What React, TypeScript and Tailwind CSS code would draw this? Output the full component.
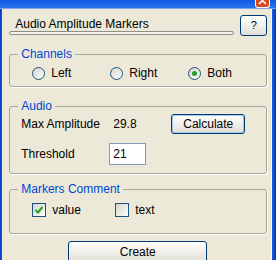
const font = { fontFamily: '"Liberation Sans", Arial, sans-serif' };

const Radio = ({ label, checked }: { label: string; checked?: boolean }) => (
  <div className="w-[78px] flex items-center gap-[6px]">
    <span className="w-[13px] h-[13px] rounded-full border border-[#1C5180] bg-linear-to-br from-[#D4D3CB] to-white flex items-center justify-center">
      {checked && <span className="w-[5px] h-[5px] rounded-full bg-[#21A121]" />}
    </span>
    <span>{label}</span>
  </div>
);

const Check = ({ label, checked, w }: { label: string; checked?: boolean; w: string }) => (
  <div className={`${w} flex items-center gap-[6px]`}>
    <span className="w-[14px] h-[14px] border border-[#1C5180] bg-linear-to-br from-[#D4D3CB] to-white flex items-center justify-center">
      {checked && (
        <svg width="10" height="10" viewBox="0 0 10 10">
          <path d="M1.5 5 L4 7.5 L8.5 2" fill="none" stroke="#21A121" strokeWidth="2" />
        </svg>
      )}
    </span>
    <span>{label}</span>
  </div>
);

const Group = ({ title, className, children }: { title: string; className: string; children: React.ReactNode }) => (
  <fieldset className={`border border-[#A8A799] rounded-[3px] shadow-[1px_1px_0_#fff] ${className}`}>
    <legend className="ml-[8px] px-[3px] text-[#0046D5] leading-[14px]">{title}</legend>
    {children}
  </fieldset>
);

export default function App() {
  return (
    <div className="w-[276px] h-[260px] flex flex-col bg-[#0842C7] overflow-hidden text-[12px] text-black" style={font}>
      {/* title bar strip */}
      <div className="h-[9px] flex justify-end pr-[6px] bg-linear-to-b from-[#0A5BE0] to-[#2A73EE] border-b border-[#7FA4EC]">
        <div className="w-[15px] h-[8px] rounded-b-[3px] border border-t-0 border-white bg-[#D8491E] flex justify-center overflow-hidden">
          <svg width="9" height="8" viewBox="0 0 9 8">
            <path d="M1 -3 L8 4 M8 -3 L1 4" stroke="#fff" strokeWidth="1.6" />
          </svg>
        </div>
      </div>
      <div className="flex flex-1">
        <div className="w-[3px] bg-linear-to-r from-[#0831B8] to-[#1E5FE0]" />
        <div className="flex-1 bg-[#ECE9D8] pl-[7px] pr-[4px] flex flex-col">
          {/* header */}
          <div className="flex items-start pt-[6px]">
            <div className="flex-1 pt-[2px]">
              <div className="pl-[6px] leading-[14px]">Audio Amplitude Markers</div>
              <div className="h-[4px] rounded-full border border-[#8E8D86] bg-[#F6F5F0]" />
            </div>
            <button className="ml-[6px] w-[27px] h-[21px] rounded-[3px] border border-[#003C74] bg-linear-to-b from-white to-[#E1DFD5] text-[11px]">
              ?
            </button>
          </div>

          <Group title="Channels" className="mt-[11px] pb-[6px]">
            <div className="flex pl-[22px] pt-[6px] leading-[13px]">
              <Radio label="Left" />
              <Radio label="Right" />
              <Radio label="Both" checked />
            </div>
          </Group>

          <Group title="Audio" className="mt-[12px] pb-[8px]">
            <div className="flex items-center pl-[11px] pt-[1px] h-[21px]">
              <span className="w-[92px]">Max Amplitude</span>
              <span className="w-[58px]">29.8</span>
              <button className="w-[74px] h-[20px] rounded-[3px] border border-[#003C74] bg-linear-to-b from-white to-[#E1DFD5] shadow-[inset_0_0_0_1px_#A8C6F2]">
                Calculate
              </button>
            </div>
            <div className="flex items-center pl-[11px] mt-[9px] h-[22px]">
              <span className="w-[88px]">Threshold</span>
              <div className="w-[37px] h-[22px] border border-[#7F9DB9] bg-white pl-[3px] flex items-center">21</div>
            </div>
          </Group>

          <Group title="Markers Comment" className="mt-[8px] pb-[14px]">
            <div className="flex pl-[22px] pt-[5px]">
              <Check label="value" checked w="w-[83px]" />
              <Check label="text" w="w-[83px]" />
            </div>
          </Group>

          <button className="mt-[7px] ml-[59px] w-[139px] h-[22px] rounded-[3px] border border-[#003C74] bg-linear-to-b from-white to-[#E1DFD5]">
            Create
          </button>
        </div>
        <div className="w-[6px] bg-linear-to-r from-[#1E5FE0] to-[#0831B8] border-l border-[#F8F7F2]" />
      </div>
    </div>
  );
}
